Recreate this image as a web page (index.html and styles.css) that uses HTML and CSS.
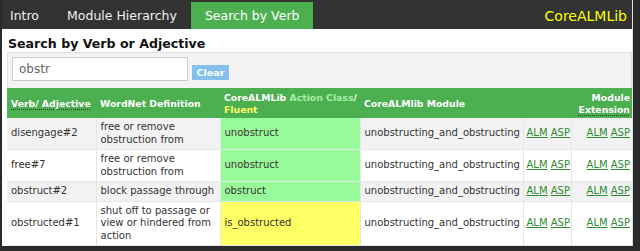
FILE: index.html
```html
<!DOCTYPE html>
<html lang="en">
<head>
    <meta charset="UTF-8">
    <meta name="viewport" content="width=device-width, initial-scale=1.0">
    <title>CoreALMLib - Search by Verb</title>
    <link rel="stylesheet" href="styles.css">
</head>
<body>
    <div class="page">
        <nav class="topnav">
            <a href="#" class="nav-tab first">Intro</a>
            <a href="#" class="nav-tab">Module Hierarchy</a>
            <a href="#" class="nav-tab active">Search by Verb</a>
            <span class="brand">CoreALMLib</span>
        </nav>

        <div class="content">
            <h1 class="page-title">Search by Verb or Adjective</h1>

            <div class="search-panel">
                <input type="text" class="search-input" value="obstr">
                <button type="button" class="btn-clear">Clear</button>
            </div>

            <table class="results">
                <colgroup>
                    <col class="c-verb">
                    <col class="c-def">
                    <col class="c-class">
                    <col class="c-module">
                    <col class="c-links">
                    <col class="c-ext">
                </colgroup>
                <thead>
                    <tr>
                        <th class="nowrap"><abbr title="WordNet sense">Verb/ Adjective</abbr></th>
                        <th class="nowrap">WordNet Definition</th>
                        <th class="nowrap">CoreALMLib <span class="h-action">Action Class</span>/<br><span class="h-fluent">Fluent</span></th>
                        <th class="nowrap">CoreALMlib Module</th>
                        <th></th>
                        <th class="right">Module<br><abbr title="Module Extension">Extension</abbr></th>
                    </tr>
                </thead>
                <tbody>
                    <tr>
                        <td>disengage#2</td>
                        <td>free or remove obstruction from</td>
                        <td class="action">unobstruct</td>
                        <td>unobstructing_and_obstructing</td>
                        <td class="links"><a href="#">ALM</a> <a href="#">ASP</a></td>
                        <td class="links right"><a href="#">ALM</a> <a href="#">ASP</a></td>
                    </tr>
                    <tr>
                        <td>free#7</td>
                        <td>free or remove obstruction from</td>
                        <td class="action">unobstruct</td>
                        <td>unobstructing_and_obstructing</td>
                        <td class="links"><a href="#">ALM</a> <a href="#">ASP</a></td>
                        <td class="links right"><a href="#">ALM</a> <a href="#">ASP</a></td>
                    </tr>
                    <tr>
                        <td>obstruct#2</td>
                        <td>block passage through</td>
                        <td class="action">obstruct</td>
                        <td>unobstructing_and_obstructing</td>
                        <td class="links"><a href="#">ALM</a> <a href="#">ASP</a></td>
                        <td class="links right"><a href="#">ALM</a> <a href="#">ASP</a></td>
                    </tr>
                    <tr>
                        <td>obstructed#1</td>
                        <td>shut off to passage or view or hindered from action</td>
                        <td class="fluent">is_obstructed</td>
                        <td>unobstructing_and_obstructing</td>
                        <td class="links"><a href="#">ALM</a> <a href="#">ASP</a></td>
                        <td class="links right"><a href="#">ALM</a> <a href="#">ASP</a></td>
                    </tr>
                </tbody>
            </table>
        </div>
    </div>
</body>
</html>
```

FILE: styles.css
```css
* {
    margin: 0;
    padding: 0;
    box-sizing: border-box;
    font-family: 'DejaVu Sans', Verdana, sans-serif;
}

html {
    background-color: #2a2a2a;
}

body {
    padding: 0 7px 5px 2px;
}

.page {
    background-color: white;
    height: 246px;
    border-right: 1px solid #ddd;
    overflow: hidden;
}

/* top navigation */
.topnav {
    display: flex;
    align-items: stretch;
    height: 29px;
    background-color: #333;
    padding-top: 2px;
    padding-right: 5px;
}

.nav-tab {
    display: flex;
    align-items: center;
    padding: 0 14px;
    color: #eee;
    text-decoration: none;
    font-size: 12.5px;
}

.nav-tab.first {
    padding-left: 8px;
}

.nav-tab.active {
    background-color: #4caf50;
    color: white;
}

.brand {
    margin-left: auto;
    display: flex;
    align-items: center;
    color: #ffff00;
    font-size: 14px;
}

/* content */
.content {
    padding: 6px 0 0 5px;
}

.page-title {
    font-size: 12.6px;
    font-weight: bold;
    color: #111;
    height: 17px;
    line-height: 17px;
    padding-left: 1px;
}

.search-panel {
    display: flex;
    align-items: center;
    gap: 4px;
    height: 36px;
    background-color: #f3f3f3;
    border: 1px solid #e0e0e0;
    border-bottom: none;
    padding-left: 4px;
}

.search-input {
    width: 176px;
    height: 24px;
    border: 1px solid #ccc;
    background-color: white;
    padding: 0 6px;
    font-size: 12px;
    color: #666;
    margin-top: -3px;
}

.btn-clear {
    width: 37px;
    height: 15px;
    margin-top: 4px;
    border: none;
    background-color: #85c1ec;
    color: white;
    font-size: 9.5px;
    font-weight: bold;
}

/* results table */
.results {
    width: 625px;
    border-collapse: collapse;
    table-layout: fixed;
    font-size: 10px;
    line-height: 12.5px;
    color: #333;
}

.c-verb { width: 89px; }
.c-def { width: 124px; }
.c-class { width: 140px; }
.c-module { width: 163px; }
.c-links { width: 48px; }
.c-ext { width: 61px; }

.results th {
    background-color: #4caf50;
    color: white;
    font-size: 9.3px;
    font-weight: bold;
    text-align: left;
    vertical-align: middle;
    padding: 3px 4px 2px 4px;
    height: 30px;
    line-height: 12px;
}

.results th.nowrap {
    white-space: nowrap;
    overflow: visible;
}

.results th abbr {
    text-decoration: underline dotted #333;
    text-underline-offset: 2px;
}

.h-action {
    color: #a5f0a5;
}

.h-fluent {
    color: #ffff66;
}

.results td {
    padding: 3px 4px;
    border-left: 1px solid #e6e6e6;
    border-bottom: 1px solid #e6e6e6;
    vertical-align: middle;
    overflow: hidden;
}

.results td:first-child {
    border-left: none;
}

.results td.links {
    white-space: nowrap;
    padding-left: 3px;
}

.results tbody tr:nth-child(odd) {
    background-color: #f2f2f2;
}

.results td.action {
    background-color: #99fa99;
}

.results td.fluent {
    background-color: #ffff66;
}

.results .right {
    text-align: right;
    padding-right: 2px;
}

.results a {
    color: #2e8b2e;
    text-decoration: underline;
}
```
